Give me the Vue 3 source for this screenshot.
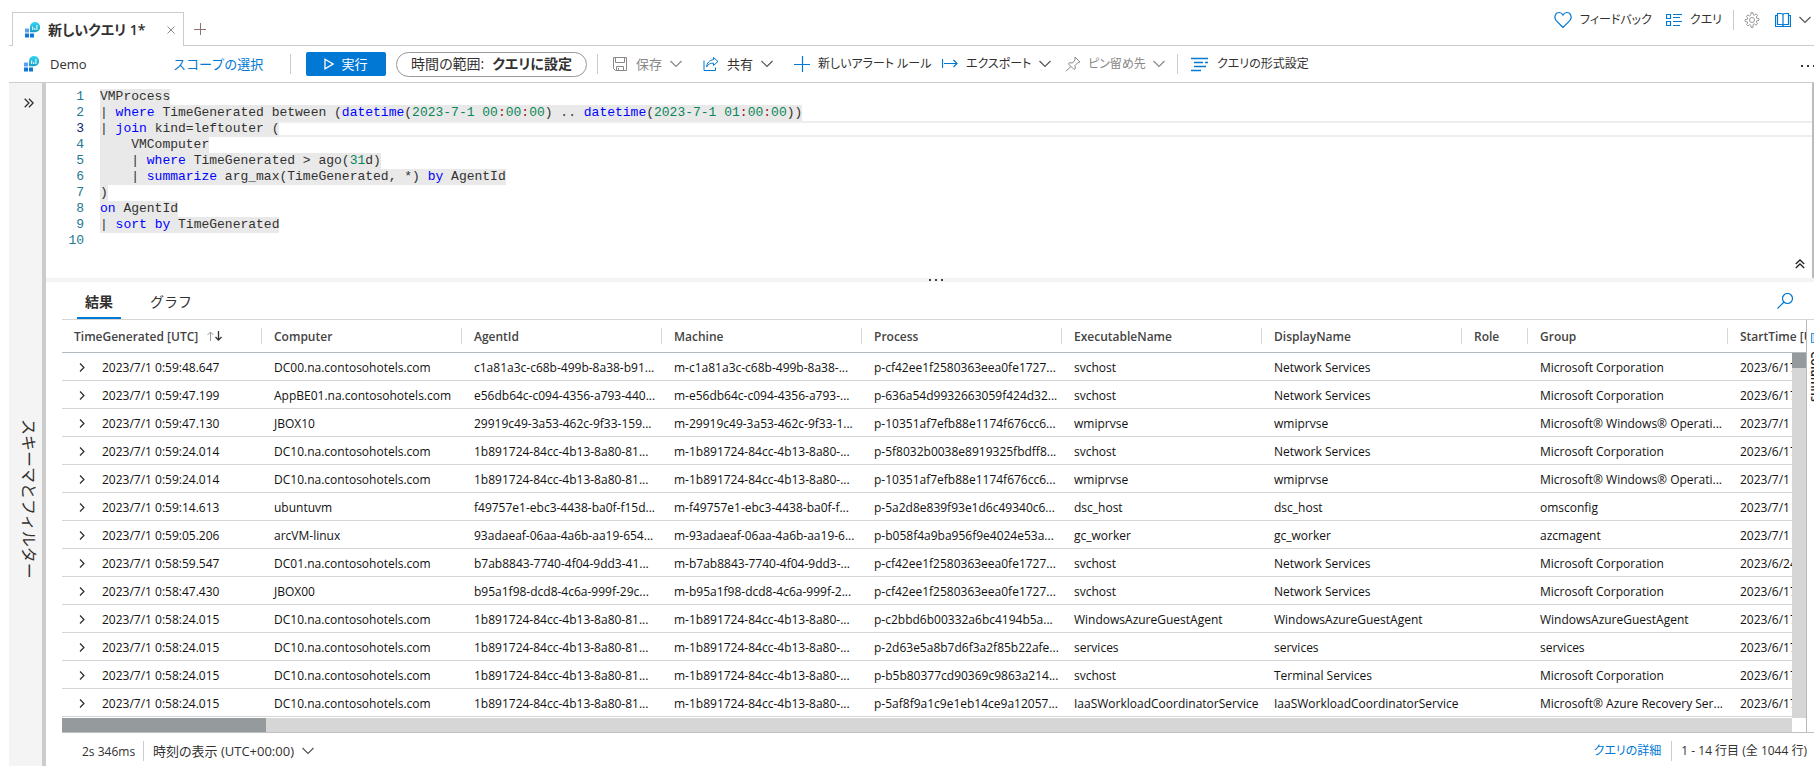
<script setup>
const columns = ['TimeGenerated [UTC]', 'Computer', 'AgentId', 'Machine', 'Process', 'ExecutableName', 'DisplayName', 'Role', 'Group', 'StartTime [UTC]']

const NS = 'Network Services'
const MC = 'Microsoft Corporation'
const DC10 = ['DC10.na.contosohotels.com', '1b891724-84cc-4b13-8a80-81...', 'm-1b891724-84cc-4b13-8a80-...']

const rows = [
  ['2023/7/1 0:59:48.647', 'DC00.na.contosohotels.com', 'c1a81a3c-c68b-499b-8a38-b91...', 'm-c1a81a3c-c68b-499b-8a38-...', 'p-cf42ee1f2580363eea0fe1727...', 'svchost', NS, '', MC, '2023/6/17'],
  ['2023/7/1 0:59:47.199', 'AppBE01.na.contosohotels.com', 'e56db64c-c094-4356-a793-440...', 'm-e56db64c-c094-4356-a793-...', 'p-636a54d9932663059f424d32...', 'svchost', NS, '', MC, '2023/6/17'],
  ['2023/7/1 0:59:47.130', 'JBOX10', '29919c49-3a53-462c-9f33-159...', 'm-29919c49-3a53-462c-9f33-1...', 'p-10351af7efb88e1174f676cc6...', 'wmiprvse', 'wmiprvse', '', 'Microsoft® Windows® Operati...', '2023/7/1'],
  ['2023/7/1 0:59:24.014', ...DC10, 'p-5f8032b0038e8919325fbdff8...', 'svchost', NS, '', MC, '2023/6/17'],
  ['2023/7/1 0:59:24.014', ...DC10, 'p-10351af7efb88e1174f676cc6...', 'wmiprvse', 'wmiprvse', '', 'Microsoft® Windows® Operati...', '2023/7/1'],
  ['2023/7/1 0:59:14.613', 'ubuntuvm', 'f49757e1-ebc3-4438-ba0f-f15d...', 'm-f49757e1-ebc3-4438-ba0f-f...', 'p-5a2d8e839f93e1d6c49340c6...', 'dsc_host', 'dsc_host', '', 'omsconfig', '2023/7/1'],
  ['2023/7/1 0:59:05.206', 'arcVM-linux', '93adaeaf-06aa-4a6b-aa19-654...', 'm-93adaeaf-06aa-4a6b-aa19-6...', 'p-b058f4a9ba956f9e4024e53a...', 'gc_worker', 'gc_worker', '', 'azcmagent', '2023/7/1'],
  ['2023/7/1 0:58:59.547', 'DC01.na.contosohotels.com', 'b7ab8843-7740-4f04-9dd3-41...', 'm-b7ab8843-7740-4f04-9dd3-...', 'p-cf42ee1f2580363eea0fe1727...', 'svchost', NS, '', MC, '2023/6/24'],
  ['2023/7/1 0:58:47.430', 'JBOX00', 'b95a1f98-dcd8-4c6a-999f-29c...', 'm-b95a1f98-dcd8-4c6a-999f-2...', 'p-cf42ee1f2580363eea0fe1727...', 'svchost', NS, '', MC, '2023/6/17'],
  ['2023/7/1 0:58:24.015', ...DC10, 'p-c2bbd6b00332a6bc4194b5a...', 'WindowsAzureGuestAgent', 'WindowsAzureGuestAgent', '', 'WindowsAzureGuestAgent', '2023/6/17'],
  ['2023/7/1 0:58:24.015', ...DC10, 'p-2d63e5a8b7d6f3a2f85b22afe...', 'services', 'services', '', 'services', '2023/6/17'],
  ['2023/7/1 0:58:24.015', ...DC10, 'p-b5b80377cd90369c9863a214...', 'svchost', 'Terminal Services', '', MC, '2023/6/17'],
  ['2023/7/1 0:58:24.015', ...DC10, 'p-5af8f9a1c9e1eb14ce9a12057...', 'IaaSWorkloadCoordinatorService', 'IaaSWorkloadCoordinatorService', '', 'Microsoft® Azure Recovery Ser...', '2023/6/17'],
]

// Each token is [text, kind]: k keyword, n number, c colon
const time = (h) => [['2023-7-1 ' + h, 'n'], [':', 'c'], ['00', 'n'], [':', 'c'], ['00', 'n']]
const code = [
  [['VMProcess']],
  [['| '], ['where', 'k'], [' TimeGenerated between ('], ['datetime', 'k'], ['('], ...time('00'), [') .. '], ['datetime', 'k'], ['('], ...time('01'), ['))']],
  [['| '], ['join', 'k'], [' kind=leftouter (']],
  [['    VMComputer']],
  [['    | '], ['where', 'k'], [' TimeGenerated > ago('], ['31', 'n'], ['d)']],
  [['    | '], ['summarize', 'k'], [' arg_max(TimeGenerated, *) '], ['by', 'k'], [' AgentId']],
  [[')']],
  [['on', 'k'], [' AgentId']],
  [['| '], ['sort', 'k'], [' '], ['by', 'k'], [' TimeGenerated']],
  [],
]
</script>

<template>
  <div class="app">
    <svg width="0" height="0" class="defs" aria-hidden="true">
      <defs>
        <linearGradient id="bubble" x1="0" y1="0" x2="0" y2="1">
          <stop offset="0" stop-color="#32d4f5" />
          <stop offset="1" stop-color="#1a9fc4" />
        </linearGradient>
        <symbol id="logo" viewBox="0 0 16 16">
          <path d="M11 0a5 5 0 0 1 0 10.200H6V5a5 5 0 0 1 5-5z" fill="url(#bubble)" />
          <path d="M8.200 4.500h1V8h-1zM10.300 6h1v2h-1zM12.400 3h1v5h-1z" fill="#fff" />
          <path d="M1 6.500h4v4H1z" fill="#5ea0ef" />
          <path d="M1 11.500h4v4H1zM6 11.500h4v4H6z" fill="#0f78d4" />
        </symbol>
        <symbol id="chev" viewBox="0 0 12 8"><path d="M.5 1 6 6.500 11.500 1" fill="none" stroke="currentColor" stroke-width="1.200" /></symbol>
      </defs>
    </svg>

    <header class="tabs">
      <div class="tab">
        <svg class="i16"><use href="#logo" /></svg>
        <span class="tab-name">新しいクエリ 1*</span>
        <button class="close" aria-label="閉じる"><svg width="8" height="8" viewBox="0 0 8 8"><path d="M.5.5l7 7M7.500.5l-7 7" stroke="#888" fill="none" /></svg></button>
      </div>
      <button class="add" aria-label="追加"><svg width="12" height="12" viewBox="0 0 12 12"><path d="M6.500 0v12M0 6.500h12" stroke="#8a7370" fill="none" /></svg></button>
      <div class="tab-tools">
        <button><svg width="18" height="18" viewBox="0 0 18 18" fill="none" stroke="#0078d4" stroke-width="1.200"><path d="M9 16.500 2 9.300C-.3 6.600 1.200 1.500 5 1.500c2 0 3.300 1.200 4 2.500.7-1.300 2-2.500 4-2.500 3.800 0 5.300 5.100 3 7.800z" /></svg>フィードバック</button>
        <button class="list-btn"><svg class="i16" viewBox="0 0 16 16" fill="none" stroke="#0078d4"><path d="M.5 2.500h4v4h-4zM.5 9.500h4v4h-4zM7 2.500h9M7 5.500h7M7 9.500h9M7 13.500h7" stroke-width="1.200" /></svg>クエリ</button>
        <i class="sep"></i>
        <button aria-label="設定" class="gear"><svg class="i16" viewBox="0 0 16 16" fill="none" stroke="#999"><circle cx="8" cy="8" r="2.500" /><path d="M6.800 2.700 7 .6h2l.2 2.100 1.300.5 1.600-1.300 1.500 1.500-1.300 1.600.5 1.300 2.100.2v2l-2.100.3-.5 1.200 1.300 1.700-1.500 1.400-1.600-1.300-1.300.6L9 15.400H7l-.2-2.100-1.300-.6-1.600 1.300-1.500-1.400L3.700 11l-.5-1.200-2.100-.3v-2l2.100-.2.500-1.300-1.300-1.600 1.500-1.500 1.600 1.300z" /></svg></button>
        <button aria-label="ヘルプ" class="book"><svg class="i16" viewBox="0 0 16 16" fill="none" stroke="#0078d4"><path d="M2.500 1.500h3.500q2 0 2 1.500 0-1.500 2-1.500h3.500v11H10q-2 0-2 1.200 0-1.200-2-1.200H2.500zM8 3v11M2.500 3.500h-2v11h15v-11h-2" stroke-width="1.200" /></svg><svg class="chev"><use href="#chev" /></svg></button>
      </div>
    </header>

    <nav class="toolbar">
      <div class="scope"><svg class="i16"><use href="#logo" /></svg><span>Demo</span></div>
      <a class="scope-link" href="#">スコープの選択</a>
      <i class="sep"></i>
      <button class="run"><svg width="10" height="12" viewBox="0 0 10 12"><path d="M1 1.200 9 6l-8 4.800z" fill="none" stroke="#fff" stroke-width="1.300" /></svg>実行</button>
      <button class="range">時間の範囲: <b>クエリに設定</b></button>
      <i class="sep"></i>
      <button class="cmd dim first"><svg class="i16" viewBox="0 0 16 16" fill="none" stroke="currentColor"><path d="M1.500 1.500h13v13h-11l-2-2zM3.500 1.500v5h9v-5M4.500 14.500v-4h7v4M6.500 12v2.500" /></svg><span>保存</span><svg class="chev"><use href="#chev" /></svg></button>
      <button class="cmd"><svg class="i16" viewBox="0 0 16 16" fill="none" stroke="#0078d4"><path d="M1 4.500v10h11.500v-3M10.500 1.500 15 5.500l-4.500 4V7.200C7.500 7 5.200 8 3.500 11c.4-4 3-7 7-7.300z" /></svg><span>共有</span><svg class="chev"><use href="#chev" /></svg></button>
      <button class="cmd kana alert"><svg class="i16" viewBox="0 0 16 16" fill="none" stroke="#0078d4"><path d="M8.500 0v16M0 8.500h16" stroke-width="1.200" /></svg><span>新しいアラート ルール</span></button>
      <button class="cmd kana export"><svg class="i16" viewBox="0 0 16 16" fill="none" stroke="#0078d4"><path d="M.5 3v9M2 7.500h13M11.500 4l3.500 3.500-3.500 3.500" stroke-width="1.200" /></svg><span>エクスポート</span><svg class="chev"><use href="#chev" /></svg></button>
      <button class="cmd kana dim pin"><svg class="i16" viewBox="0 0 16 16" fill="none" stroke="currentColor"><path d="M10 1l5 5-2 .5-3 3 .3 3.200-1.300.8L3.500 8l.8-1.300 3.200.3 2.500-3zM6 10.500.8 15.200" /></svg><span>ピン留め先</span><svg class="chev"><use href="#chev" /></svg></button>
      <i class="sep"></i>
      <button class="cmd kana format"><svg width="19" height="16" viewBox="0 0 19 16" stroke="#0078d4" stroke-width="1.500"><path d="M1 2.500h17M4 6.500h9M15 6.500h3M4 10.500h12M1 14.500h10" /></svg><span>クエリの形式設定</span></button>
      <button class="more" aria-label="その他"><svg width="13" height="2" viewBox="0 0 13 2"><path d="M0 0h2v2H0zM6 0h2v2H6zM12 0h2v2h-2z" fill="#333" /></svg></button>
    </nav>

    <div class="body">
      <aside class="rail">
        <button class="expand" aria-label="展開"><svg width="10" height="10" viewBox="0 0 10 10"><path d="M.7.8 4.900 5 .7 9.200M4.900.8 9.100 5 4.900 9.200" fill="none" stroke="#333" stroke-width="1.300" /></svg></button>
        <span class="rail-label">スキーマとフィルター</span>
      </aside>

      <main class="main">
        <section class="editor">
          <div v-for="(line, i) in code" :key="i" class="line" :class="{ active: i === 2 }">
            <span class="num">{{ i + 1 }}</span>
            <code v-if="line.length"><span v-for="(t, j) in line" :key="j" :class="t[1]">{{ t[0] }}</span></code>
            <i class="rest"></i>
          </div>
          <button class="collapse" aria-label="折りたたむ"><svg width="10" height="10" viewBox="0 0 10 10"><path d="M.8 5 5 1l4.200 4M.8 9 5 5l4.200 4" fill="none" stroke="#222" stroke-width="1.300" /></svg></button>
        </section>
        <div class="splitter"><span class="grip"><i></i><i></i><i></i></span></div>

        <section class="results">
          <div class="result-tabs" role="tablist">
            <button role="tab" class="on">結果</button>
            <button role="tab">グラフ</button>
            <button class="search" aria-label="検索"><svg class="i16" viewBox="0 0 16 16" fill="none" stroke="#0078d4" stroke-width="1.200"><circle cx="10.500" cy="5.500" r="5" /><path d="M7 9 .5 15.500" /></svg></button>
          </div>
          <div class="grid-area">
            <div class="grid">
              <table>
                <colgroup>
                  <col v-for="(c, i) in columns" :key="c" :class="i === 7 ? 'narrow' : i === 9 ? 'fill' : 'wide'" />
                </colgroup>
                <thead>
                  <tr>
                    <th v-for="(c, i) in columns" :key="c" scope="col">{{ c }}<svg v-if="i === 0" class="sort" width="16" height="10" viewBox="0 0 16 10" fill="none"><path d="M3.500 10V1M.5 4l3-3 3 3" stroke="#999" /><path d="M11.500 0v9M8.500 6l3 3 3-3" stroke="#333" stroke-width="1.300" /></svg></th>
                  </tr>
                </thead>
                <tbody>
                  <tr v-for="(r, i) in rows" :key="i">
                    <td v-for="(c, j) in r" :key="j"><button v-if="j === 0" class="open" aria-label="展開"><svg width="6" height="9" viewBox="0 0 6 9"><path d="M1 .5 5 4.500 1 8.500" fill="none" stroke="#222" stroke-width="1.100" /></svg></button>{{ c }}</td>
                  </tr>
                </tbody>
              </table>
              <div class="vbar"><i></i></div>
              <div class="hbar"><i></i></div>
            </div>
            <aside class="cols"><i></i><span>Columns</span></aside>
          </div>
          <footer class="status">
            <span class="elapsed">2s 346ms</span>
            <button class="tz">時刻の表示 (UTC+00:00)<svg class="chev"><use href="#chev" /></svg></button>
            <a href="#">クエリの詳細</a>
            <span class="count">1 - 14 行目 (全 1044 行)</span>
          </footer>
        </section>
      </main>
    </div>
  </div>
</template>

<style>
body { margin: 0; overflow: hidden; }
</style>

<style scoped>
.app {
  height: 100vh;
  display: flex;
  flex-direction: column;
  padding-left: 9px;
  box-sizing: border-box;
  overflow: hidden;
  background: #fff;
  color: #323130;
  font: 13px/16px "Open Sans", "Noto Sans CJK JP", sans-serif;
  font-feature-settings: "palt";
}
.defs { position: absolute; }
button { background: none; border: 0; padding: 0; margin: 0; font: inherit; color: inherit; white-space: nowrap; font-feature-settings: inherit; display: inline-flex; align-items: center; }
a { color: #0078d4; text-decoration: none; white-space: nowrap; }
svg { flex: none; }
.i16 { width: 16px; height: 16px; }
.chev { width: 12px; height: 8px; color: #555; }
.sep { flex: none; width: 1px; height: 20px; background: #ccc; }

.tabs { flex: none; height: 46px; display: flex; align-items: flex-end; box-sizing: border-box; box-shadow: inset 0 -1px #ccc; }
.tab { width: 172px; height: 34px; margin-left: 3px; box-sizing: border-box; border: 1px solid #ccc; border-bottom: 0; background: #fff; display: flex; align-items: center; padding: 0 8px 0 11px; }
.tab-name { font-size: 14px; font-weight: 600; margin-left: 8px; white-space: nowrap; }
.close { margin-left: auto; }
.add { margin: 0 0 11px 10px; }
.tab-tools { margin-left: auto; height: 52px; display: flex; align-items: center; font-size: 12px; }
.tab-tools button { gap: 8px; }
.tab-tools .list-btn { margin: 0 11px 0 14px; }
.tab-tools .gear { margin: 0 15px 0 10px; }
.tab-tools .book { padding-right: 3px; }

.toolbar { flex: none; height: 37px; box-sizing: border-box; border-bottom: 1px solid #ccc; display: flex; align-items: center; }
.scope { display: flex; align-items: center; gap: 11px; width: 149px; padding-left: 14px; box-sizing: border-box; }
.scope-link { width: 107px; margin-left: 15px; margin-right: 10px; font-feature-settings: normal; }
.run { width: 80px; height: 24px; margin: 0 10px 0 15px; justify-content: center; gap: 7px; background: #0078d4; color: #fff; border-radius: 2px; }
.range { height: 25px; box-sizing: border-box; width: 191px; margin-right: 10px; justify-content: center; gap: 8px; border: 1px solid #999; border-radius: 13px; font-size: 14px; }
.range b { font-weight: 600; }
.cmd { gap: 8px; width: 91px; }
.first { margin-left: 14px; }
.kana { font-size: 12px; }
.alert { width: 148px; }
.export { width: 123px; }
.pin { width: 112px; gap: 7px; }
.dim { color: #8a8886; }
.dim .chev { color: #8a8886; }
.format { margin-left: 12px; width: auto; }
.more { margin-left: auto; height: 16px; padding-top: 4px; }

.body { flex: 1; min-height: 0; display: flex; }
.rail { flex: none; width: 33px; padding-left: 6px; box-sizing: content-box; width: 27px; background: #f4f4f4; border-right: 4px solid #ccc; display: flex; flex-direction: column; align-items: center; }
.expand { margin-top: 15px; }
.rail-label { margin: auto 0; padding-top: 124px; writing-mode: vertical-rl; text-orientation: sideways; font-size: 16px; line-height: 20px; white-space: nowrap; font-feature-settings: normal; }

.main { flex: 1; min-width: 0; display: flex; flex-direction: column; }
.editor { flex: none; height: 189px; padding-top: 6px; position: relative; border-right: 2px solid #bbb; font: 13px/16px "Liberation Mono", monospace; }
.line { display: flex; height: 16px; }
.num { width: 38px; margin-right: 16px; text-align: right; color: #237893; }
.active .num { color: #0b216f; }
code { font: inherit; white-space: pre; background: #e9e9e9; }
.rest { flex: 1; }
.active .rest { border: solid #eee; border-width: 2px 0; }
.k { color: #0000ff; }
.n { color: #098658; }
.c { color: #a31515; }
.collapse { position: absolute; right: 7px; bottom: 9px; }
.splitter { flex: none; height: 4px; padding-left: 12px; background: #f4f4f4; display: flex; align-items: center; justify-content: center; }
.grip { display: flex; gap: 4px; }
.grip i { width: 2px; height: 2px; background: #444; }

.results { flex: 1; min-height: 0; display: flex; flex-direction: column; }
.result-tabs { flex: none; height: 38px; box-sizing: border-box; margin-left: 16px; border-bottom: 1px solid #d6d6d6; display: flex; padding: 0 21px 0 15px; font-size: 14px; font-feature-settings: normal; }
.result-tabs [role="tab"] { padding: 3px 8px 0; height: 37px; box-sizing: border-box; margin-right: 21px; }
.result-tabs .on { font-weight: 600; border-bottom: 2px solid #0078d4; width: 44px; padding-top: 5px; justify-content: center; }
.result-tabs .search { margin-left: auto; }
.grid-area { flex: none; margin-left: 16px; display: flex; border-bottom: 1px solid #c0c0c0; }
.grid { flex: 1; min-width: 0; position: relative; overflow: hidden; border-right: 1px solid #b3bac0; }
table { width: 100%; table-layout: fixed; border-collapse: separate; border-spacing: 0; font-size: 12px; color: #111; }
.wide { width: 200px; }
.narrow { width: 66px; }
th, td { padding: 2px 0 0 12px; text-align: left; white-space: nowrap; overflow: hidden; box-sizing: border-box; }
th { height: 33px; font-weight: 600; color: #444; border-bottom: 1px solid #b3bac0; background: linear-gradient(#d6d6d6, #d6d6d6) right center / 1px 16px no-repeat; }
th:last-child { background: none; }
td { height: 28px; border-bottom: 1px solid #d6d6d6; }
.open { width: 28px; padding-left: 5px; box-sizing: border-box; }
.sort { margin-left: 9px; }
.vbar { position: absolute; right: 0; top: 33px; bottom: 14px; width: 14px; background: #d6d6d6; }
.vbar i { display: block; height: 15px; background: #959a9d; }
.hbar { height: 14px; margin: 1px 14px 0 0; background: #d6d6d6; }
.hbar i { display: block; width: 204px; height: 14px; background: #959a9d; }
.cols { flex: none; width: 7px; overflow: hidden; padding-left: 4px; box-sizing: border-box; }
.cols i { display: block; width: 12px; height: 8px; margin-top: 13px; border: 1px solid #3a96dd; background: #cfe4f6; }
.cols span { display: block; margin-top: 8px; writing-mode: vertical-rl; font-size: 12px; font-weight: 600; line-height: 8px; color: #222; }
.status { flex: 1; display: flex; align-items: center; padding: 2px 7px 0 36px; font-size: 12px; white-space: nowrap; }
.elapsed { width: 61px; padding-top: 2px; box-sizing: border-box; }
.tz { gap: 8px; height: 20px; padding-left: 9px; border-left: 1px solid #ccc; font-size: 13px; }
.status a { margin-left: auto; padding-right: 10px; }
.count { border-left: 1px solid #ccc; padding-left: 9px; line-height: 20px; }
</style>
